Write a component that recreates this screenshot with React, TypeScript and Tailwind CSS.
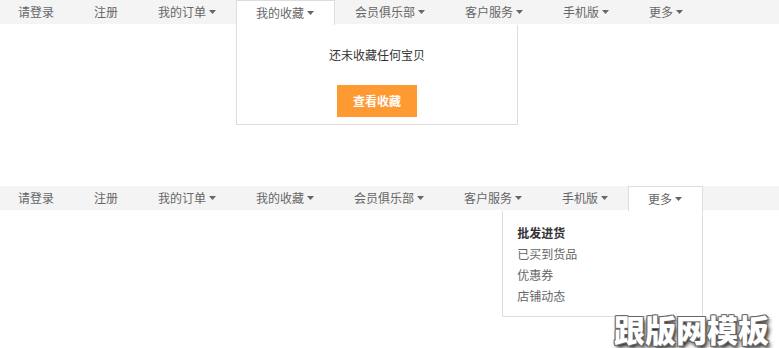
import React from "react";

interface NavItem {
  label: string;
  arrow: boolean;
}

const items: NavItem[] = [
  { label: "请登录", arrow: false },
  { label: "注册", arrow: false },
  { label: "我的订单", arrow: true },
  { label: "我的收藏", arrow: true },
  { label: "会员俱乐部", arrow: true },
  { label: "客户服务", arrow: true },
  { label: "手机版", arrow: true },
  { label: "更多", arrow: true },
];

function Arrow() {
  return (
    <svg width="7" height="4" viewBox="0 0 7 4" className="ml-[3px]">
      <path d="M0 0 L7 0 L3.5 4 Z" fill="#666" />
    </svg>
  );
}

function NavBar({ active }: { active: string }) {
  return (
    <ul className="flex h-6 bg-[#f4f4f4] text-[12px] text-[#666]">
      {items.map((item, i) => {
        const isActive = item.label === active;
        return (
          <li
            key={item.label}
            className={
              "relative flex items-center " +
              (isActive
                ? "z-20 h-[25px] border-x border-t border-[#ddd] bg-white pl-[19px] pr-5"
                : (i === 0 ? "h-6 pl-[18px] pr-5" : "h-6 px-5"))
            }
          >
            <span>{item.label}</span>
            {item.arrow && <Arrow />}
            {isActive && active === "我的收藏" && (
              <div className="absolute left-[-1px] top-6 z-10 w-[282px] border-x border-b border-[#ddd] bg-white pb-[7px] text-center">
                <p className="pt-[22px] text-[12px] leading-4 text-[#333]">
                  还未收藏任何宝贝
                </p>
                <button className="mx-auto mt-[22px] block h-[32px] w-20 bg-[#ff9a33] text-[12px] font-bold text-white">
                  查看收藏
                </button>
              </div>
            )}
            {isActive && active === "更多" && (
              <div className="absolute right-[-1px] top-6 z-10 w-[201px] border-x border-b border-[#ddd] bg-white pb-[10px] pl-[14px] pt-[11px] text-left">
                <p className="text-[12px] font-bold leading-[21px] text-[#333]">批发进货</p>
                <p className="text-[12px] leading-[21px] text-[#666]">已买到货品</p>
                <p className="text-[12px] leading-[21px] text-[#666]">优惠券</p>
                <p className="text-[12px] leading-[21px] text-[#666]">店铺动态</p>
              </div>
            )}
          </li>
        );
      })}
    </ul>
  );
}

export default function App() {
  return (
    <main
      className="relative h-[348px] w-[779px] overflow-hidden bg-white"
      style={{ fontFamily: '"Noto Sans CJK SC", "Noto Sans", sans-serif' }}
    >
      <section className="h-[186px]">
        <NavBar active="我的收藏" />
      </section>

      <section>
        <NavBar active="更多" />
      </section>

      <div className="absolute bottom-[4px] right-[10px] z-30 text-[31px] font-black leading-none text-white [text-shadow:1px_1px_0_#666,-1px_-1px_0_#666,1px_-1px_0_#666,-1px_1px_0_#666,2px_3px_4px_#000]">
        跟版网模板
      </div>
    </main>
  );
}
